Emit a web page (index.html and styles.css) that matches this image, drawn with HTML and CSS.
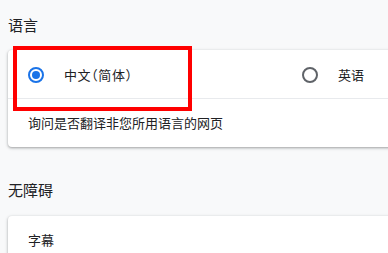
FILE: index.html
```html
<!DOCTYPE html>
<html lang="zh-CN">
<head>
<meta charset="utf-8">
<link rel="stylesheet" href="styles.css">
</head>
<body>
<div class="page">
  <h2 class="section-title first">语言</h2>
  <div class="card">
    <div class="row radio-row">
      <label class="option">
        <span class="radio checked"></span>
        <span class="option-label compact">中文（简体）</span>
      </label>
      <label class="option">
        <span class="radio"></span>
        <span class="option-label">英语</span>
      </label>
    </div>
    <div class="divider"></div>
    <div class="row">
      <span class="row-text">询问是否翻译非您所用语言的网页</span>
    </div>
    <div class="highlight"></div>
  </div>
  <h2 class="section-title second">无障碍</h2>
  <div class="card">
    <div class="row">
      <span class="row-text">字幕</span>
    </div>
  </div>
</div>
</body>
</html>
```

FILE: styles.css
```css
html, body {
  margin: 0;
  padding: 0;
  background: #f8f9fa;
  overflow: hidden;
}

.page {
  width: 388px;
  height: 253px;
  padding-left: 8px;
  box-sizing: border-box;
  overflow: hidden;
  font-family: "Noto Sans CJK SC", "Noto Sans", sans-serif;
  color: #202124;
}

.section-title {
  margin: 0;
  font-size: 15px;
  line-height: 20px;
  font-weight: 400;
  color: #202124;
}

.section-title.first {
  padding-top: 15px;
  margin-bottom: 15px;
}

.section-title.second {
  margin-top: 33px;
  margin-bottom: 16px;
}

.card {
  position: relative;
  width: 588px;
  background: #ffffff;
  border-radius: 4px;
  box-shadow: 0 1px 2px 0 rgba(60, 64, 67, 0.3), 0 1px 3px 1px rgba(60, 64, 67, 0.15);
}

.row {
  height: 48px;
  display: flex;
  align-items: center;
  padding-left: 20px;
  font-size: 13px;
}

.radio-row {
  padding-top: 1px;
  height: 47px;
}

.option {
  width: 274px;
  display: flex;
  align-items: center;
  gap: 20px;
}

.radio {
  width: 16px;
  height: 16px;
  box-sizing: border-box;
  border: 2px solid #5f6368;
  border-radius: 50%;
  display: flex;
  align-items: center;
  justify-content: center;
  flex: none;
}

.radio.checked {
  border-color: #1a73e8;
}

.radio.checked::after {
  content: "";
  width: 8px;
  height: 8px;
  border-radius: 50%;
  background: #1a73e8;
}

.option-label {
  font-size: 13px;
  line-height: 20px;
}

.option-label.compact {
  font-feature-settings: "halt";
  letter-spacing: 0.6px;
}

.row-text {
  font-size: 13px;
  line-height: 20px;
}

.divider {
  height: 1px;
  background: #e8eaed;
}

.highlight {
  position: absolute;
  left: 5px;
  top: -4px;
  width: 179px;
  height: 65px;
  box-sizing: border-box;
  border: 4px solid #ff0000;
}
```
